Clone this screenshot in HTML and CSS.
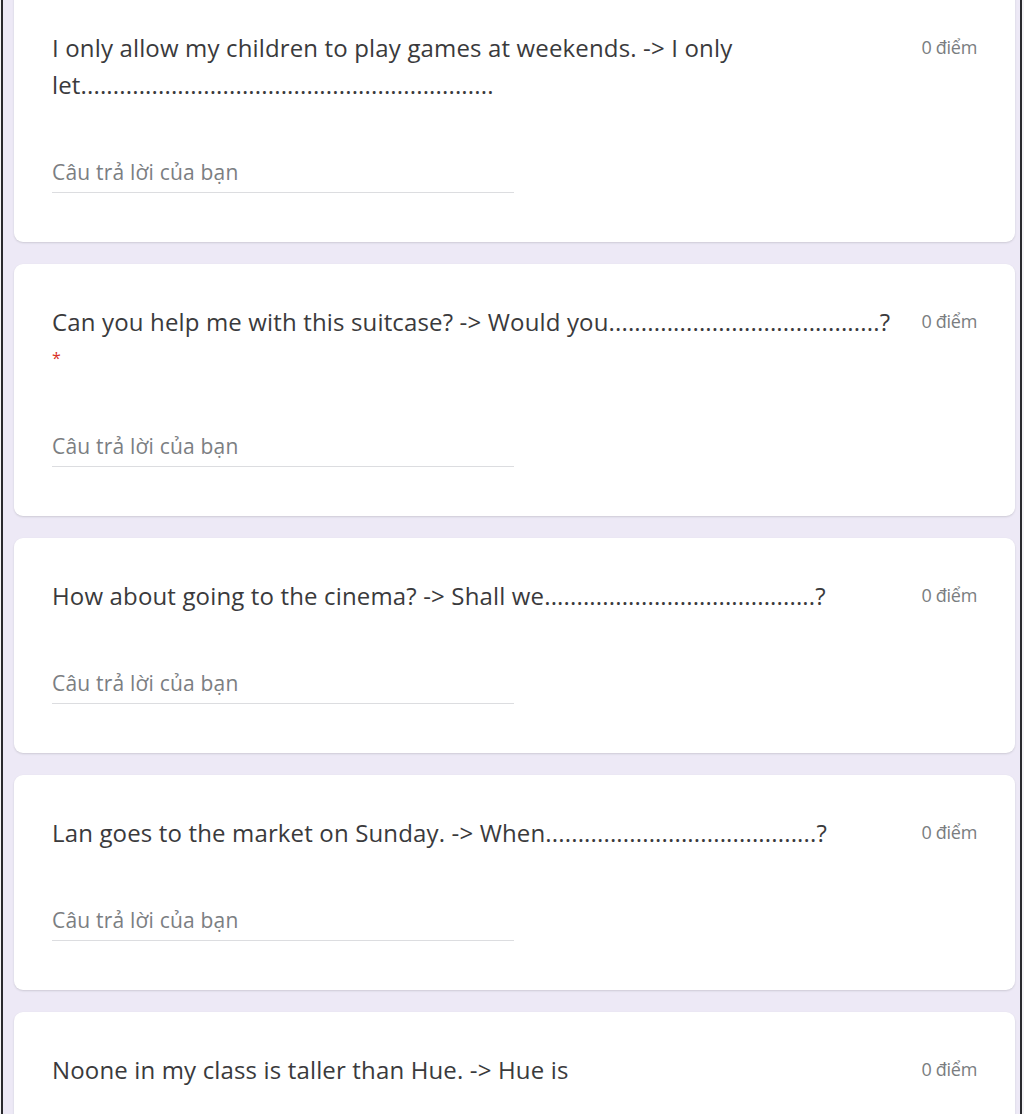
FILE: index.html
```html
<!DOCTYPE html>
<html lang="vi">
<head>
<meta charset="utf-8">
<title>Form</title>
<link rel="stylesheet" href="styles.css">
</head>
<body>
<div class="frame">
  <div class="list">
    <section class="card">
      <div class="head">
        <div class="question">I only allow my children to play games at weekends. -&gt; I only let................................................................</div>
        <div class="points">0 điểm</div>
      </div>
      <div class="answer"><span class="placeholder">Câu trả lời của bạn</span></div>
    </section>
    <section class="card">
      <div class="head">
        <div class="question">Can you help me with this suitcase? -&gt; Would you..........................................? <span class="req">*</span></div>
        <div class="points">0 điểm</div>
      </div>
      <div class="answer"><span class="placeholder">Câu trả lời của bạn</span></div>
    </section>
    <section class="card">
      <div class="head">
        <div class="question">How about going to the cinema? -&gt; Shall we..........................................?</div>
        <div class="points">0 điểm</div>
      </div>
      <div class="answer"><span class="placeholder">Câu trả lời của bạn</span></div>
    </section>
    <section class="card">
      <div class="head">
        <div class="question">Lan goes to the market on Sunday. -&gt; When..........................................?</div>
        <div class="points">0 điểm</div>
      </div>
      <div class="answer"><span class="placeholder">Câu trả lời của bạn</span></div>
    </section>
    <section class="card">
      <div class="head">
        <div class="question">Noone in my class is taller than Hue. -&gt; Hue is</div>
        <div class="points">0 điểm</div>
      </div>
      <div class="answer"><span class="placeholder">Câu trả lời của bạn</span></div>
    </section>
  </div>
</div>
</body>
</html>
```
FILE: styles.css
```css
html, body {
  margin: 0;
  padding: 0;
  background: #f4f4f6;
  height: 1114px;
  overflow: hidden;
}
.frame {
  margin: 0 2px 0 1px;
  border-left: 2px solid #2a2a2e;
  border-right: 2px solid #2a2a2e;
  background: #ede9f6;
  padding: 0 5px 0 11px;
  height: 1114px;
  overflow: hidden;
}
.list {
  display: flex;
  flex-direction: column;
  gap: 22px;
  margin-top: -10px;
}
.card {
  background: #ffffff;
  border-radius: 9px;
  box-shadow: 0 1px 2px rgba(60, 64, 67, 0.18);
  padding: 39px 38px 49px 38px;
  font-family: "Open Sans", Roboto, sans-serif;
}
.head {
  display: flex;
  align-items: flex-start;
  gap: 24px;
}
.question {
  flex: 1;
  font-size: 24px;
  line-height: 37px;
  color: #3a3a3c;
  letter-spacing: 0.15px;
}
.req {
  color: #d93025;
  font-size: 16px;
  line-height: 1;
  vertical-align: 4px;
}
.points {
  font-size: 18px;
  line-height: 37px;
  color: #7a7d80;
  white-space: nowrap;
  letter-spacing: -0.3px;
}
.answer {
  width: 462px;
  margin-top: 57px;
  padding-bottom: 8px;
  border-bottom: 1px solid #dcdde0;
}
.placeholder {
  font-size: 21px;
  line-height: 24px;
  color: #7b7e82;
  display: block;
  letter-spacing: 0.2px;
}
```
